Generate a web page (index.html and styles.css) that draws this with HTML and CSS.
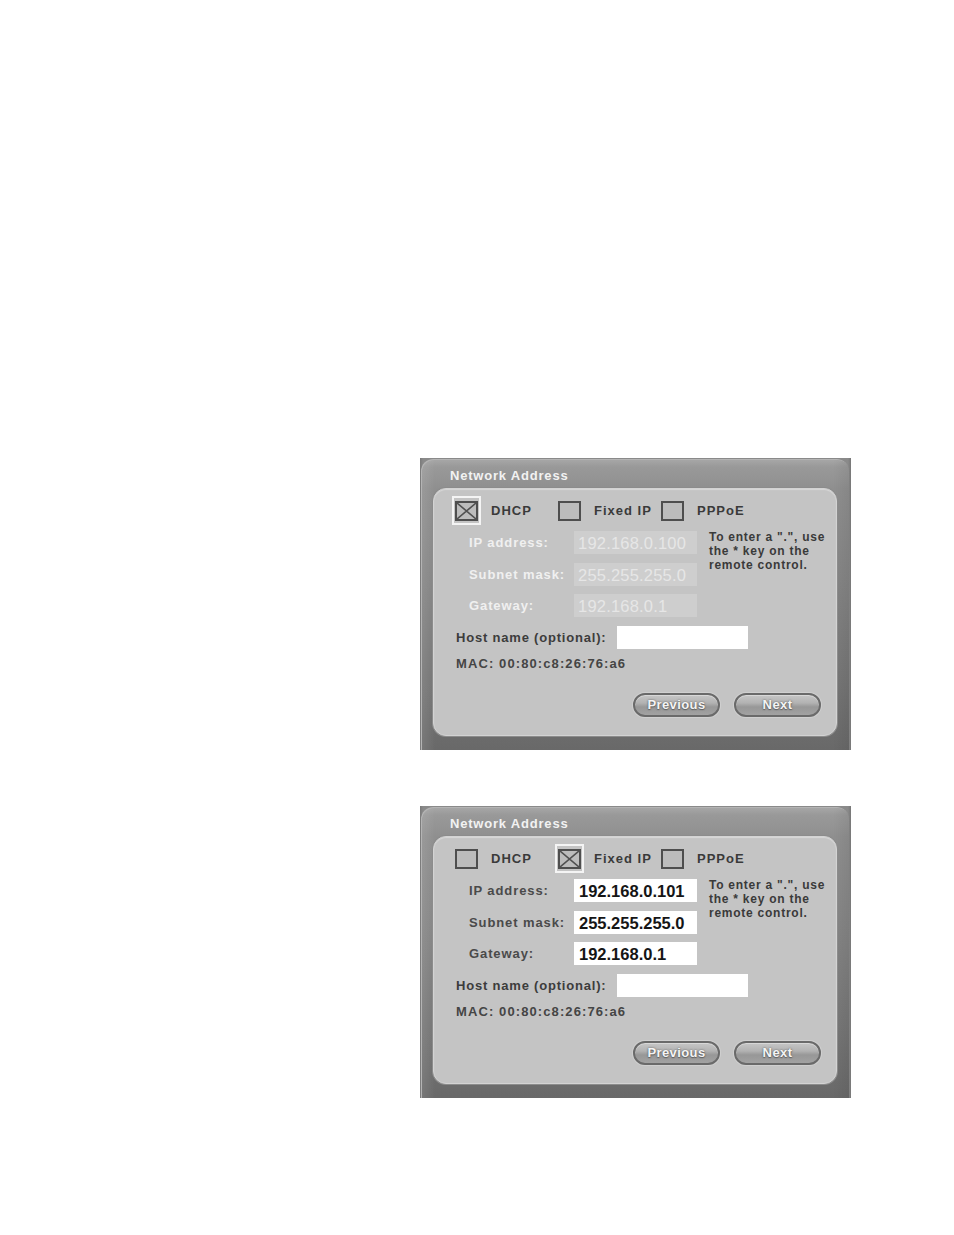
FILE: index.html
```html
<!DOCTYPE html>
<html>
<head>
<meta charset="utf-8">
<link rel="stylesheet" href="styles.css">
</head>
<body>
<div class="page">
  <div class="frame">
    <div class="chrome">
      <div class="title">Network Address</div>
      <div class="panel">
        <div class="opts">
          <div class="opt"><span class="ring on"><span class="box"><svg viewBox="0 0 19 16" preserveAspectRatio="none"><path d="M0 0L19 16M19 0L0 16" stroke="#505050" stroke-width="1.6" fill="none"/></svg></span></span><span class="opt-label">DHCP</span></div>
          <div class="opt"><span class="ring"><span class="box"></span></span><span class="opt-label">Fixed IP</span></div>
          <div class="opt"><span class="ring"><span class="box"></span></span><span class="opt-label">PPPoE</span></div>
        </div>
        <div class="fields disabled">
          <div class="flabel">IP address:</div><div class="field">192.168.0.100</div>
          <div class="flabel">Subnet mask:</div><div class="field">255.255.255.0</div>
          <div class="flabel">Gateway:</div><div class="field">192.168.0.1</div>
          <div class="hint">To enter a ".", use<br>the * key on the<br>remote control.</div>
        </div>
        <div class="host"><span class="host-label">Host name (optional):</span><span class="host-field"></span></div>
        <div class="mac">MAC: 00:80:c8:26:76:a6</div>
        <div class="buttons"><span class="btn">Previous</span><span class="btn">Next</span></div>
      </div>
    </div>
  </div>
  <div class="frame">
    <div class="chrome">
      <div class="title">Network Address</div>
      <div class="panel">
        <div class="opts">
          <div class="opt"><span class="ring"><span class="box"></span></span><span class="opt-label">DHCP</span></div>
          <div class="opt"><span class="ring on"><span class="box"><svg viewBox="0 0 19 16" preserveAspectRatio="none"><path d="M0 0L19 16M19 0L0 16" stroke="#505050" stroke-width="1.6" fill="none"/></svg></span></span><span class="opt-label">Fixed IP</span></div>
          <div class="opt"><span class="ring"><span class="box"></span></span><span class="opt-label">PPPoE</span></div>
        </div>
        <div class="fields">
          <div class="flabel">IP address:</div><div class="field">192.168.0.101</div>
          <div class="flabel">Subnet mask:</div><div class="field">255.255.255.0</div>
          <div class="flabel">Gateway:</div><div class="field">192.168.0.1</div>
          <div class="hint">To enter a ".", use<br>the * key on the<br>remote control.</div>
        </div>
        <div class="host"><span class="host-label">Host name (optional):</span><span class="host-field"></span></div>
        <div class="mac">MAC: 00:80:c8:26:76:a6</div>
        <div class="buttons"><span class="btn">Previous</span><span class="btn">Next</span></div>
      </div>
    </div>
  </div>
</div>
</body>
</html>
```
FILE: styles.css
```css
* { box-sizing: border-box; }
html, body { margin: 0; padding: 0; background: #ffffff; }
body { font-family: "Liberation Sans", Arial, sans-serif; }
.page {
  padding: 458px 0 0 420px;
  display: flex;
  flex-direction: column;
  gap: 56px;
}
.frame {
  width: 431px;
  height: 292px;
  background: linear-gradient(90deg, #7a7a7a 0, #8a8a8a 3px, #8a8a8a 428px, #777 431px);
  padding: 1px 2px 0 1px;
}
.chrome {
  height: 100%;
  border-radius: 12px 12px 0 0;
  background:
    linear-gradient(90deg, rgba(255,255,255,0.10) 0, rgba(255,255,255,0) 14px, rgba(255,255,255,0) 412px, rgba(0,0,0,0.06) 428px),
    linear-gradient(180deg, #a8a8a8 0, #999999 8px, #8f8f8f 30px, #858585 120px, #767676 220px, #696969 290px);
  box-shadow: inset 1px 1px 0 #b4b4b4;
  padding-top: 4px;
}
.title {
  height: 25px;
  line-height: 25px;
  padding-left: 29px;
  color: #f2f2f2;
  font-weight: bold;
  font-size: 13px;
  letter-spacing: 0.8px;
}
.panel {
  margin: 0 0 0 12px;
  width: 404px;
  height: 248px;
  border-radius: 13px;
  background: #c4c4c4;
  border: 1px solid #d3d3d3;
  box-shadow: 0 0 0 1px #8c8c8c, inset 0 1px 1px rgba(255,255,255,0.35);
  padding: 7px 15px 0 18px;
  color: #3c3c3c;
  font-weight: bold;
  font-size: 13px;
}
.opts { display: flex; height: 29px; align-items: center; }
.opt { width: 103px; display: flex; align-items: center; }
.ring {
  width: 29px; height: 29px;
  border: 2px solid transparent;
  display: flex; align-items: center; justify-content: center;
}
.ring.on { border-color: #f4f4f4; }
.box {
  width: 23px; height: 20px;
  border: 2px solid #4e4e4e;
  background: #bcbcbc;
  display: block;
}
.box svg { display: block; width: 19px; height: 16px; }
.opt-label { margin-left: 10px; letter-spacing: 1px; color: #3a3a3a; }
.fields {
  margin: 6px 0 0 17px;
  display: grid;
  grid-template-columns: 105px 123px 1fr;
  grid-auto-rows: 23px;
  row-gap: 8.5px;
  align-items: center;
}
.flabel { grid-column: 1; color: #4a4a4a; letter-spacing: 0.9px; white-space: nowrap; }
.field {
  grid-column: 2;
  height: 23px;
  background: #ffffff;
  color: #151515;
  font-size: 16.5px;
  font-weight: bold;
  line-height: 25px;
  padding-left: 5px;
}
.hint {
  grid-column: 3;
  grid-row: 1 / span 3;
  align-self: start;
  margin-left: 12px;
  margin-top: -1px;
  font-size: 12px;
  line-height: 14px;
  letter-spacing: 0.75px;
  color: #3a3a3a;
  white-space: nowrap;
}
.disabled .flabel { color: #f0f0f0; }
.disabled .field { background: #cecece; color: #e6e6e6; font-weight: normal; padding-left: 4px; letter-spacing: 0.2px; }
.host { margin: 9px 0 0 4px; display: flex; align-items: center; height: 23px; }
.host-label { width: 161px; letter-spacing: 0.8px; color: #3c3c3c; }
.host-field { width: 131px; height: 23px; background: #ffffff; }
.mac { margin: 7px 0 0 4px; height: 16px; line-height: 16px; letter-spacing: 1.1px; color: #454545; }
.buttons { margin-top: 21px; display: flex; justify-content: flex-end; gap: 14px; }
.btn {
  width: 87px; height: 24px;
  border-radius: 12px;
  border: 2px solid #6a6a6a;
  box-shadow: 0 0 0 1px #d0d0d0, inset 0 1px 0 #d8d8d8;
  background: linear-gradient(180deg, #c6c6c6 0%, #b2b2b2 40%, #979797 60%, #a2a2a2 100%);
  color: #f4f4f4;
  text-shadow: 0 0 2px #555, 0 1px 1px #666;
  text-align: center;
  line-height: 20px;
  font-size: 13px;
  letter-spacing: 0.4px;
}
```
